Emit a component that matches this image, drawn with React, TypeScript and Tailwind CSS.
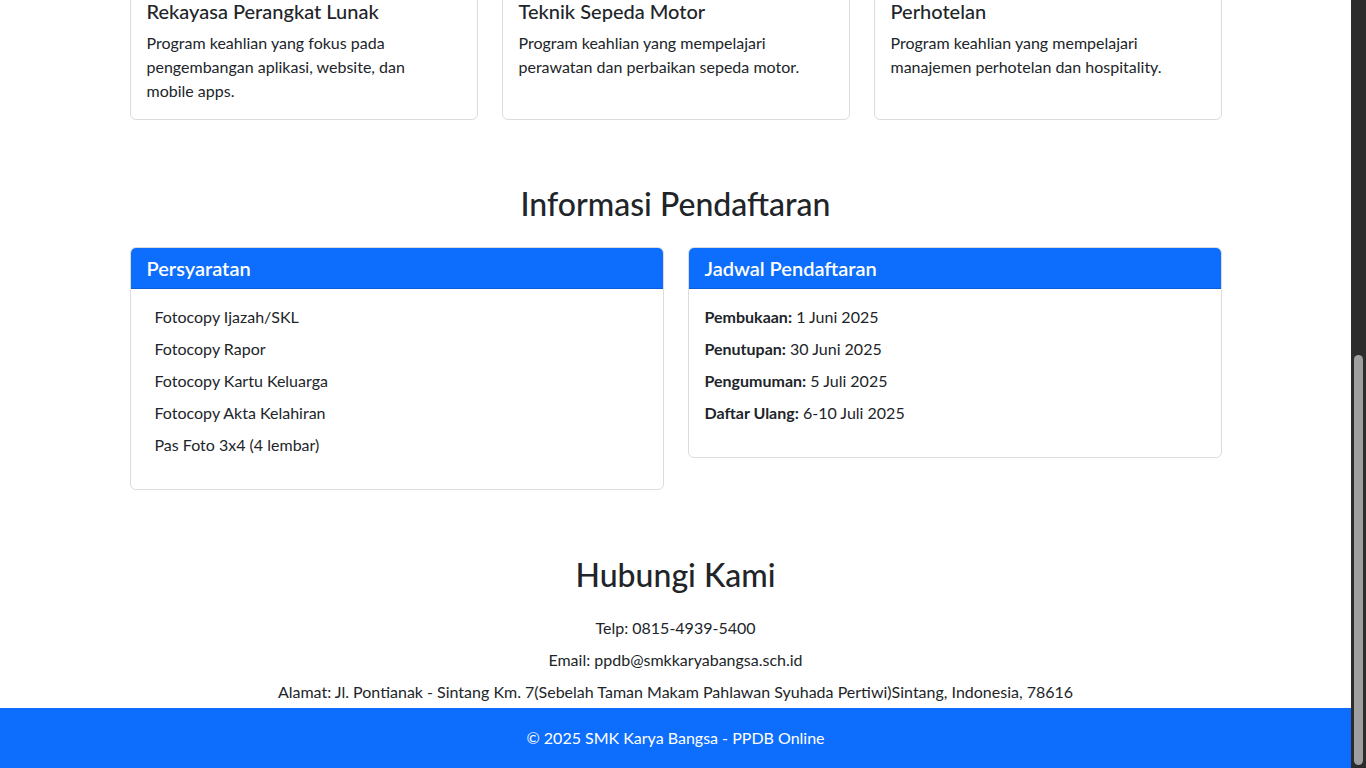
import React from 'react';

const jurusan = [
    { title: 'Rekayasa Perangkat Lunak', desc: 'Program keahlian yang fokus pada pengembangan aplikasi, website, dan mobile apps.' },
    { title: 'Teknik Sepeda Motor', desc: 'Program keahlian yang mempelajari perawatan dan perbaikan sepeda motor.' },
    { title: 'Perhotelan', desc: 'Program keahlian yang mempelajari manajemen perhotelan dan hospitality.' },
];

const syarat = [
    'Fotocopy Ijazah/SKL',
    'Fotocopy Rapor',
    'Fotocopy Kartu Keluarga',
    'Fotocopy Akta Kelahiran',
    'Pas Foto 3x4 (4 lembar)',
];

const jadwal = [
    { label: 'Pembukaan:', value: '1 Juni 2025' },
    { label: 'Penutupan:', value: '30 Juni 2025' },
    { label: 'Pengumuman:', value: '5 Juli 2025' },
    { label: 'Daftar Ulang:', value: '6-10 Juli 2025' },
];

export default function App() {
    return (
        <div className="h-screen w-full flex overflow-hidden bg-white text-[#212529] font-['Lato','Liberation_Sans',sans-serif] text-[16px] leading-[24px]">
            <div className="flex-1 flex flex-col overflow-hidden">
                {/* jurusan cards (page is scrolled, top cut off) */}
                <div className="w-[1092px] mx-auto -mt-[18px] grid grid-cols-3 gap-6">
                    {jurusan.map((j) => (
                        <div key={j.title} className="border border-[#dcdcdc] rounded-[6px] p-4">
                            <h5 className="text-[20px] leading-[24px] font-medium mb-2">{j.title}</h5>
                            <p className="pr-2">{j.desc}</p>
                        </div>
                    ))}
                </div>

                <h2 className="mt-[65px] mb-6 text-center text-[32px] leading-[38px] font-medium">Informasi Pendaftaran</h2>

                <div className="w-[1092px] mx-auto grid grid-cols-2 gap-6 items-start">
                    <div className="border border-[#dcdcdc] rounded-[6px] overflow-hidden">
                        <div className="bg-[#0d6efd] border-b border-[#0b5ed7] px-4 py-2 text-white text-[20px] leading-[24px] font-semibold">
                            Persyaratan
                        </div>
                        <ul className="p-4 pl-6 pb-8 flex flex-col gap-2">
                            {syarat.map((s) => (
                                <li key={s}>{s}</li>
                            ))}
                        </ul>
                    </div>
                    <div className="border border-[#dcdcdc] rounded-[6px] overflow-hidden">
                        <div className="bg-[#0d6efd] border-b border-[#0b5ed7] px-4 py-2 text-white text-[20px] leading-[24px] font-semibold">
                            Jadwal Pendaftaran
                        </div>
                        <div className="p-4 pb-8 flex flex-col gap-2">
                            {jadwal.map((d) => (
                                <p key={d.label}>
                                    <strong className="font-bold">{d.label}</strong> {d.value}
                                </p>
                            ))}
                        </div>
                    </div>
                </div>

                <h2 className="mt-[66px] mb-[22px] text-center text-[32px] leading-[38px] font-medium">Hubungi Kami</h2>
                <div className="flex flex-col items-center gap-2">
                    <p>Telp: 0815-4939-5400</p>
                    <p>Email: ppdb@smkkaryabangsa.sch.id</p>
                    <p>Alamat: Jl. Pontianak - Sintang Km. 7(Sebelah Taman Makam Pahlawan Syuhada Pertiwi)Sintang, Indonesia, 78616</p>
                </div>

                <footer className="mt-1 h-[60px] shrink-0 bg-[#0d6efd] text-white flex items-center justify-center">
                    © 2025 SMK Karya Bangsa - PPDB Online
                </footer>
            </div>

            {/* scrollbar */}
            <div className="w-[15px] shrink-0 bg-[#2c2c2c] flex flex-col items-center">
                <div className="mt-[355px] mb-[3px] flex-1 w-[9px] rounded-full bg-[#9f9f9f]"></div>
            </div>
        </div>
    );
}
